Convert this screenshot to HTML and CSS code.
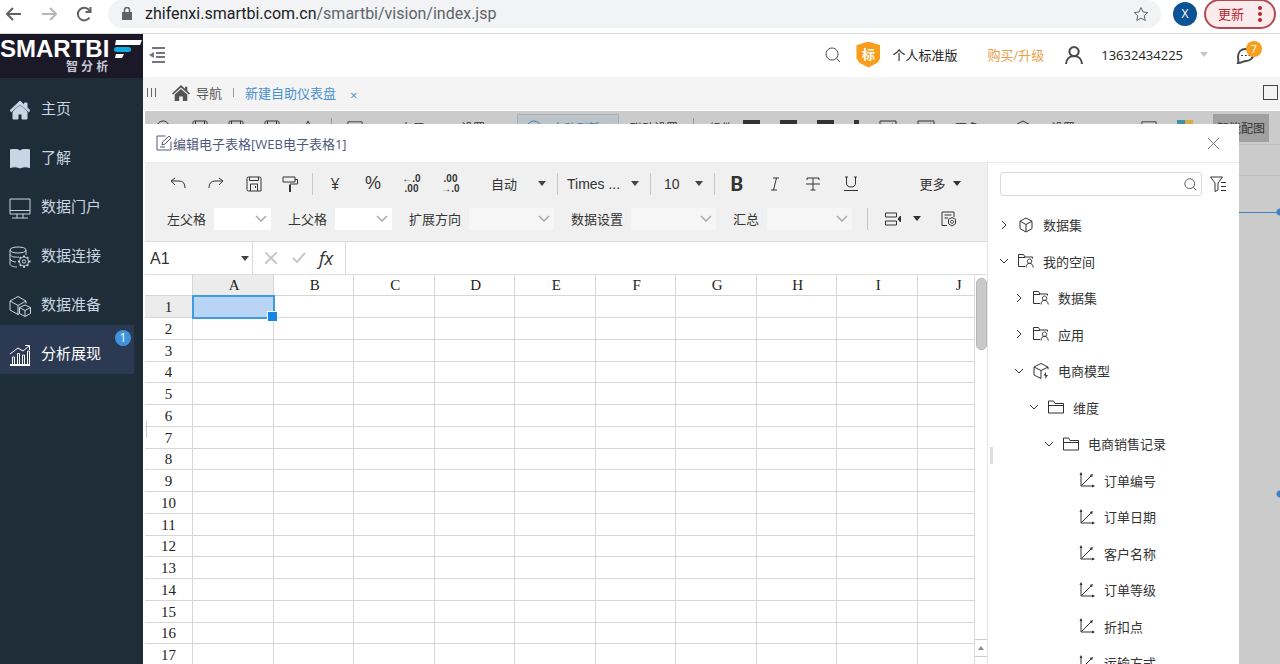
FILE: index.html
```
<!DOCTYPE html>
<html lang="zh-CN">
  <head>
    <meta charset="utf-8" />
    <title>Smartbi 智分析</title>
    <link rel="stylesheet" href="styles.css" />
  </head>

  <body>
    <!-- Shared icons -->
    <svg width="0" height="0" class="sprite">
      <symbol id="home" viewBox="0 0 20 20">
        <path fill="currentColor" d="M10 1 0 10.5l1.3 1.3L10 4l8.700 7.800L20 10.500l-3-2.900V3h-2.500v2.300zM10 5.500 3 11.800V19h5v-5h4v5h5v-7.200z" />
      </symbol>
      <symbol id="folder" viewBox="1 1 16 14">
        <path d="M1.500 14V2h5l1.500 2.500h8.500V14zM1.500 6.500h15" />
      </symbol>
      <symbol id="folder-user" viewBox="1 1 16 15">
        <path d="M8 14H1.500V2h5L8 4.500h7.500V6M1.500 5H8M12.500 6.500a2.200 2.200 0 1 0 .1 0M9 15c.2-3 1.500-4.200 3.500-4.200S15.800 12 16.300 15" />
      </symbol>
      <symbol id="cube" viewBox="0 0 16 16">
        <path d="M8 1l6 3.200v7.400L8 15l-6-3.400V4.200zM2 4.200 8 7.500l6-3.300M8 7.500V15" />
      </symbol>
      <symbol id="axis" viewBox="0 0 16 16">
        <path d="M2 1.500V14h13M2.500 13.500 13 3" />
        <path fill="currentColor" stroke="none" d="M2 0 .5 3h3zM16 14l-3-1.500v3zM14 2l-3.300 1 2.300 2.300z" />
      </symbol>
      <symbol id="search" viewBox="0 0 16 16">
        <path d="M7 1a6 6 0 1 0 .1 0M11.500 11.500 15 15" />
      </symbol>
      <symbol id="save" viewBox="0 0 16 16">
        <path d="M1 2.500Q1 1 2.500 1h11Q15 1 15 2.500V15H2.500Q1 15 1 13.500zM3.500 1v3.500h9V1M4.500 15V8h7v7M9.500 10v2" />
      </symbol>
      <symbol id="caret" viewBox="0 0 8 5">
        <path fill="currentColor" stroke="none" d="M0 0h8L4 5z" />
      </symbol>
      <symbol id="image" viewBox="0 0 18 16">
        <path d="M1 1h16v14H1zM2 12l5-5 4 4 3-2 3 3M13 4h1" />
      </symbol>
    </svg>

    <div class="browser-bar">
      <button class="plain" aria-label="后退">
        <svg class="icon" width="16" height="14" viewBox="0 0 16 14"><path d="M15 7H1M7 1 1 7l6 6" /></svg>
      </button>
      <button class="plain faded" aria-label="前进">
        <svg class="icon" width="16" height="14" viewBox="0 0 16 14"><path d="M1 7h14M9 1l6 6-6 6" /></svg>
      </button>
      <button class="plain" aria-label="刷新">
        <svg class="icon bold" width="16" height="16" viewBox="0 0 16 16"><path d="M13.500 11.500A6.300 6.300 0 1 1 13 4l1.500 2" /><path d="M14.500 1v5h-5" /></svg>
      </button>
      <div class="omnibox">
        <svg width="10" height="13" viewBox="0 0 10 13"><path fill="#5f6368" d="M0 5h10v8H0z" /><path fill="none" stroke="#5f6368" stroke-width="1.500" d="M2.500 5V3a2.500 2.500 0 0 1 5 0v2" /></svg>
        <span class="url">zhifenxi.smartbi.com.cn<span>/smartbi/vision/index.jsp</span></span>
        <svg class="icon star" width="16" height="16" viewBox="0 0 16 16"><path d="M8 1.500l2 4.500 4.800.5-3.600 3.200 1 4.800L8 12l-4.200 2.500 1-4.800L1.200 6.500 6 6z" /></svg>
      </div>
      <span class="avatar">X</span>
      <button class="update">更新
        <svg width="4" height="16" viewBox="0 0 4 16"><circle cx="2" cy="2" r="2" fill="#b3262d" /><circle cx="2" cy="8" r="2" fill="#b3262d" /><circle cx="2" cy="14" r="2" fill="#b3262d" /></svg>
      </button>
    </div>

    <div class="app">
      <aside class="sidebar">
        <div class="logo">
          <div class="logo-name">
            <span>SMARTBI</span>
            <svg width="28" height="20" viewBox="0 0 28 20"><path fill="#fff" d="M2 1h26l-2 5H1zM2 15h8l-2 4H1z" /><rect x="0" y="8" width="17" height="5" rx="2.500" fill="#10a9e0" /></svg>
          </div>
          <span class="logo-sub">智 分 析</span>
        </div>
        <nav>
          <a href="#"><svg class="icon solid"><use href="#home" /></svg>主页</a>
          <a href="#"><svg class="icon solid" viewBox="0 0 20 20"><path fill="currentColor" d="M0 1c4-1 7-1 9.500.500V19C7 17.500 4 17.500 0 18.500zM20 1c-4-1-7-1-9.500.500V19c2.500-1.500 5.500-1.500 9.500-.500z" /></svg>了解</a>
          <a href="#"><svg class="icon" viewBox="0 0 22 22"><path d="M1 2h20v15H1zM1 13.500h20M8 17v4M14 17v4M3 21h16" /></svg>数据门户</a>
          <a href="#"><svg class="icon" viewBox="0 0 22 22"><path d="M1 4c0-4 16-4 16 0s-16 4-16 0v14c0 2 4 3 7 3M1 8.500c1 2.500 6 3 9 2.500M1 13c1 2 4 3 6 3M17 4v5" /><circle cx="15" cy="15.500" r="4.500" /><circle cx="15" cy="15.500" r="1.700" /><path stroke-width="2" d="M15 9.500v1.500M15 20v1.700M9 15.500h1.500M19.500 15.500h2M10.800 11.300l1 1M19.200 19.700l-1-1M19.200 11.300l-1 1M10.800 19.700l1-1" /></svg>数据连接</a>
          <a href="#"><svg class="icon" viewBox="0 0 22 22"><path d="M10 19l-1 .5L1 15V6l8-4.500L17 6v2.500M1 6l8 4.500L17 6M9 10.500v9M16 10l5.500 2.500v6L16 21.500l-5.500-3v-6zM10.500 12.500 16 15.500l5.500-3M16 15.500v6" /></svg>数据准备</a>
          <a href="#" class="active"><svg class="icon" viewBox="0 0 22 22"><path stroke-width="2" d="M1 21h20" /><path d="M3.500 20v-7h2v7M8.500 20V9.500h2V20M13.500 20v-9h2v9M18.500 20V7h2v13" /><path d="M1 10l8-6 5 3 6-5M16 1.500h4.500V6" /></svg>分析展现<span class="badge">1</span></a>
        </nav>
      </aside>

      <main>
        <header class="header">
          <button class="plain fold" aria-label="收起菜单">
            <svg width="16" height="16" viewBox="0 0 16 16"><path fill="none" stroke="#74777c" stroke-width="2" d="M3 1h13M7 6h9M7 10h9M3 15h13" /><path fill="#74777c" d="M0 8l5-3v6z" /></svg>
          </button>
          <button class="plain" aria-label="搜索"><svg class="icon" width="16" height="16"><use href="#search" /></svg></button>
          <span class="shield">标</span>
          <span class="edition">个人标准版</span>
          <a href="#" class="buy">购买/升级</a>
          <svg class="icon bold" width="18" height="18" viewBox="0 0 18 18"><path d="M9 1a4.600 4.600 0 1 0 .1 0M1 18c.3-5 3.500-8 8-8s7.700 3 8 8" /></svg>
          <span class="phone">13632434225</span>
          <svg class="user-caret" width="10" height="5"><use href="#caret" /></svg>
          <button class="plain chat" aria-label="消息">
            <svg class="icon bold" width="18" height="18" viewBox="0 0 18 18"><path d="M2 17c1-2 0-4 0-6 0-5 3-8 7.500-8S17 6 17 9s-3 6-7 6c-3 0-4 2-8 2z" /><path d="M6 9v1M10 9v1M13.500 9v1" /></svg>
            <span class="count">7</span>
          </button>
        </header>

        <div class="tabs">
          <svg width="9" height="9" viewBox="0 0 9 9"><path stroke="#666" d="M.5 0v9M4.500 0v9M8.500 0v9" /></svg>
          <a href="#" class="nav-tab"><svg width="18" height="18"><use href="#home" /></svg>导航</a>
          <span class="tab-line"></span>
          <a href="#" class="current">新建自助仪表盘</a>
          <button class="plain tab-close" aria-label="关闭标签">×</button>
          <span class="window-box"></span>
        </div>

        <div class="workspace">
          <!-- Dashboard toolbar, mostly hidden behind the dialog -->
          <div class="dash-bar">
            <svg class="icon" width="16" height="16"><use href="#search" /></svg>
            <svg class="icon" width="16" height="16"><use href="#save" /></svg>
            <svg class="icon" width="16" height="16"><use href="#save" /></svg>
            <svg class="icon" width="16" height="16"><use href="#save" /></svg>
            <svg class="icon" width="16" height="16" viewBox="0 0 16 16"><path d="M1 15 8 1l7 14" /></svg>
            <i></i>
            <svg class="icon dash-chart" width="16" height="16"><use href="#image" /></svg>
            <span class="dash-text">布局</span>
            <span class="dash-text">设置</span>
            <button class="dash-on"><svg class="icon" width="16" height="16" viewBox="0 0 16 16"><circle cx="8" cy="8" r="7" /></svg>自动刷新</button>
            <span>联动设置</span>
            <i></i>
            <span class="dash-part">组件</span>
            <b></b><b></b><b></b><b class="dot"></b>
            <svg class="icon" width="18" height="16"><use href="#image" /></svg>
            <svg class="icon" width="18" height="16"><use href="#image" /></svg>
            <span class="dash-text">更多</span>
            <svg class="icon" width="16" height="16"><use href="#cube" /></svg>
            <span>设置</span>
            <svg class="icon dash-end" width="16" height="16"><use href="#image" /></svg>
            <em></em>
            <button class="match">智能配图</button>
          </div>
          <div class="dash-row"></div>
          <div class="dash-canvas"></div>

          <section class="dialog" role="dialog" aria-label="编辑电子表格">
            <div class="dialog-title">
              <svg class="icon" width="16" height="16" viewBox="0 0 16 16"><path d="M9.500 1H1v14h14V6.500M6 10l.7-3L13 1l2 2-6.200 6.200zM4 12h5" /></svg>
              <span>编辑电子表格[WEB电子表格1]</span>
              <button class="plain" aria-label="关闭"><svg class="icon" width="11" height="11" viewBox="0 0 11 11"><path d="M0 0l11 11M11 0 0 11" /></svg></button>
            </div>

            <div class="dialog-body">
              <div class="editor">
                <div class="toolbar">
                  <div class="tool-row">
                    <button aria-label="撤销"><svg class="icon" width="16" height="14" viewBox="0 0 16 14"><path d="M5 1 1 4l4 4M1 4h8q6 0 6 7" /></svg></button>
                    <button aria-label="重做"><svg class="icon" width="16" height="14" viewBox="0 0 16 14"><path d="M11 1l4 3-4 4M15 4H7q-6 0-6 7" /></svg></button>
                    <button aria-label="保存"><svg class="icon" width="16" height="16"><use href="#save" /></svg></button>
                    <button class="brush" aria-label="格式刷"><svg class="icon" width="16" height="16" viewBox="0 0 16 16"><path d="M1 1h12v5H1zM13 3.500h2.500V8H8v2" /><path stroke-width="2" d="M8 9v7" /></svg></button>
                    <i></i>
                    <button>¥</button>
                    <button class="percent">%</button>
                    <button class="decimal" aria-label="减少小数">←.0<br />.00</button>
                    <button class="decimal" aria-label="增加小数">.00<br />→.0</button>
                    <select class="fmt" aria-label="格式"><option>自动</option></select>
                    <i></i>
                    <select class="font" aria-label="字体"><option>Times ...</option></select>
                    <i></i>
                    <select class="size" aria-label="字号"><option>10</option></select>
                    <i></i>
                    <button class="b">B</button>
                    <button aria-label="斜体"><svg class="icon" width="10" height="14" viewBox="0 0 10 14"><path d="M3 1h6M1 13h6M6.500 1l-3 12" /></svg></button>
                    <button aria-label="删除线"><svg class="icon" width="14" height="14" viewBox="0 0 14 14"><path d="M1 3V1h12v2M7 1v12M4.500 13h5M0 7h14" /></svg></button>
                    <button aria-label="下划线"><svg class="icon" width="14" height="15" viewBox="0 0 14 15"><path d="M1 1h3M10 1h3M2.500 1v6q0 4 4.500 4t4.500-4V1M0 14.500h14" /></svg></button>
                    <button class="more">更多<svg class="icon" width="8" height="5"><use href="#caret" /></svg></button>
                  </div>
                  <div class="tool-row fields">
                    <label for="left">左父格</label>
                    <select id="left"></select>
                    <label for="top">上父格</label>
                    <select id="top"></select>
                    <label for="expand">扩展方向</label>
                    <select id="expand" class="wide" disabled></select>
                    <label for="data">数据设置</label>
                    <select id="data" class="wide" disabled></select>
                    <label for="total">汇总</label>
                    <select id="total" class="wide" disabled></select>
                    <i></i>
                    <button class="insert" aria-label="插入"><svg class="icon" width="16" height="14" viewBox="0 0 16 14"><path d="M.5 1h11v4H.500zM.5 9h11v4H.500z" /><path fill="currentColor" d="M13 7l2.500-3v6z" /></svg><svg class="icon" width="8" height="5"><use href="#caret" /></svg></button>
                    <button aria-label="设置"><svg class="icon" width="16" height="16" viewBox="0 0 16 16"><path d="M6 14.500H1V1h12v5M3.500 4h7M3.500 7H7" /><path d="M11 6.500l3.500 1.800v4.400L11 15l-3.500-2.300V8.300zM11 9.300a1.500 1.500 0 1 0 .1 0" /></svg></button>
                  </div>
                </div>

                <div class="formula">
                  <select class="cell-name" aria-label="单元格"><option>A1</option></select>
                  <div class="formula-tools">
                    <svg class="icon bold" width="12" height="12" viewBox="0 0 12 12"><path d="M0 0l12 12M12 0 0 12" /></svg>
                    <svg class="icon bold" width="14" height="12" viewBox="0 0 14 12"><path d="M1 6l4 4 8-9" /></svg>
                    <span>fx</span>
                  </div>
                  <input type="text" aria-label="公式" />
                </div>

                <div class="sheet">
                  <div class="cells">
                    <table>
                      <thead>
                        <tr id="letters"><th class="corner"></th></tr>
                      </thead>
                      <tbody id="rows"></tbody>
                    </table>
                  </div>
                  <div class="scroll">
                    <div class="thumb"></div>
                    <div class="scroll-btn"><svg width="6" height="4" viewBox="0 0 6 4"><path fill="#888" d="M0 4h6L3 0z" /></svg></div>
                    <div class="scroll-btn"></div>
                  </div>
                </div>
                <span class="grip"></span>
              </div>

              <div class="panel">
                <span class="splitter"></span>
                <div class="find">
                  <div class="find-box">
                    <input type="text" aria-label="搜索字段" />
                    <svg class="icon" width="13" height="13"><use href="#search" /></svg>
                  </div>
                  <button class="plain" aria-label="筛选"><svg class="icon" width="16" height="16" viewBox="0 0 16 16"><path d="M.5 1h12L8 7v7l-3 1.500V7zM11 6.500h5M11 10.500h5M11 14.500h5" /></svg></button>
                </div>
                <ul class="tree">
                  <li><svg class="icon arrow" viewBox="0 0 8 8"><path d="M2 0l4 4-4 4" /></svg><svg class="icon"><use href="#cube" /></svg>数据集</li>
                  <li><svg class="icon arrow" viewBox="0 0 8 8"><path d="M0 2l4 4 4-4" /></svg><svg class="icon"><use href="#folder-user" /></svg>我的空间</li>
                  <li class="l1"><svg class="icon arrow" viewBox="0 0 8 8"><path d="M2 0l4 4-4 4" /></svg><svg class="icon"><use href="#folder-user" /></svg>数据集</li>
                  <li class="l1"><svg class="icon arrow" viewBox="0 0 8 8"><path d="M2 0l4 4-4 4" /></svg><svg class="icon"><use href="#folder-user" /></svg>应用</li>
                  <li class="l1"><svg class="icon arrow" viewBox="0 0 8 8"><path d="M0 2l4 4 4-4" /></svg><svg class="icon" viewBox="0 0 16 16"><path d="M8 15.500 1 12V4l7-3.500L15 4v2.500M1 4l7 3.500L15 4M8 7.500v8" /><path fill="currentColor" d="M13 9l-2.500 3.500h2L12 16l3-4h-2z" stroke="none" /></svg>电商模型</li>
                  <li class="l2"><svg class="icon arrow" viewBox="0 0 8 8"><path d="M0 2l4 4 4-4" /></svg><svg class="icon"><use href="#folder" /></svg>维度</li>
                  <li class="l3"><svg class="icon arrow" viewBox="0 0 8 8"><path d="M0 2l4 4 4-4" /></svg><svg class="icon"><use href="#folder" /></svg>电商销售记录</li>
                  <li class="l4"><svg class="icon"><use href="#axis" /></svg>订单编号</li>
                  <li class="l4"><svg class="icon"><use href="#axis" /></svg>订单日期</li>
                  <li class="l4"><svg class="icon"><use href="#axis" /></svg>客户名称</li>
                  <li class="l4"><svg class="icon"><use href="#axis" /></svg>订单等级</li>
                  <li class="l4"><svg class="icon"><use href="#axis" /></svg>折扣点</li>
                  <li class="l4"><svg class="icon"><use href="#axis" /></svg>运输方式</li>
                </ul>
              </div>
            </div>
          </section>
        </div>
      </main>
    </div>

    <script>
      const letters = document.getElementById("letters");
      const rows = document.getElementById("rows");

      for (const name of "ABCDEFGHIJ") {
        const th = document.createElement("th");
        th.textContent = name;
        letters.appendChild(th);
      }

      for (let i = 1; i <= 17; i++) {
        const tr = document.createElement("tr");
        tr.innerHTML = "<th>" + i + "</th>" + "<td></td>".repeat(10);
        rows.appendChild(tr);
      }

      // Select cell A1
      letters.children[1].className = "picked";
      rows.rows[0].cells[0].className = "picked";
      rows.rows[0].cells[1].className = "selected";
    </script>
  </body>
</html>
```
FILE: styles.css
```
* {
  box-sizing: border-box;
}

body {
  margin: 0;
  height: 100vh;
  overflow: hidden;
  display: flex;
  flex-direction: column;
  font-family: "Open Sans", "Noto Sans CJK SC", sans-serif;
  font-size: 13px;
  color: #333;
  background: #fff;
}

button,
input,
select {
  font: inherit;
  color: inherit;
}

button {
  padding: 0;
  border: none;
  background: none;
  cursor: pointer;
}

a {
  color: inherit;
  text-decoration: none;
}

.sprite {
  position: absolute;
}

.icon {
  fill: none;
  stroke: currentColor;
  flex: none;
}

.icon.bold {
  stroke-width: 2;
}

.plain {
  display: flex;
  align-items: center;
}

/* Browser bar */
.browser-bar {
  flex: none;
  display: flex;
  align-items: center;
  height: 34px;
  padding: 0 4px 6px 6px;
  border-bottom: 1px solid #d8d8da;
  color: #5f6368;
}

.browser-bar > .plain {
  width: 35px;
}

.browser-bar .icon {
  stroke-width: 2;
}

.browser-bar .star {
  stroke-width: 1;
}

.browser-bar .faded {
  color: #b4b6b9;
}

.omnibox {
  flex: 1;
  display: flex;
  align-items: center;
  gap: 13px;
  height: 28px;
  margin-left: -3px;
  padding: 0 12px 0 14px;
  border-radius: 14px;
  background: #f1f3f4;
}

.url {
  flex: 1;
  font-family: Roboto, sans-serif;
  font-size: 16px;
  color: #202124;
}

.url span {
  color: #5f6368;
}

.avatar {
  width: 24px;
  height: 24px;
  margin-left: 12px;
  border-radius: 50%;
  background: #0b5394;
  color: #fff;
  font-size: 12px;
  line-height: 24px;
  text-align: center;
}

.update {
  display: flex;
  align-items: center;
  gap: 14px;
  height: 30px;
  margin-left: 7px;
  padding: 0 12px;
  border: 2px solid #b3494e;
  border-radius: 15px;
  background: #fcebec;
  color: #b3262d;
}

.app {
  flex: 1;
  display: flex;
  min-height: 0;
}

/* Sidebar */
.sidebar {
  width: 143px;
  flex: none;
  background: #1e2d37;
  color: #c9d5e2;
}

.logo {
  height: 44px;
  padding-top: 4px;
  background: #1b1928;
  color: #fff;
}

.logo-name {
  display: flex;
  align-items: center;
  gap: 5px;
  height: 21px;
  font: bold 24px/20px "Liberation Sans", sans-serif;
}

.logo-name span {
  width: 109px;
}

.logo-sub {
  display: block;
  padding-left: 66px;
  font-size: 12px;
  font-weight: bold;
  line-height: 16px;
  color: #c5c8d4;
}

.sidebar nav {
  padding-top: 2px;
}

.sidebar nav a {
  position: relative;
  display: flex;
  align-items: center;
  gap: 10px;
  height: 49px;
  margin-right: 9px;
  padding: 6px 0 0 9px;
  font-size: 15px;
}

.sidebar nav .icon {
  width: 22px;
  height: 22px;
  margin-top: 4px;
}

.sidebar nav .solid {
  padding: 1px;
}

.sidebar nav .active {
  background: #2b3953;
  color: #fff;
}

.badge {
  position: absolute;
  right: 3px;
  top: 5px;
  width: 16px;
  height: 16px;
  border-radius: 50%;
  background: #3d94dc;
  font-size: 12px;
  line-height: 16px;
  text-align: center;
}

main {
  flex: 1;
  display: flex;
  flex-direction: column;
  min-width: 0;
}

.header {
  flex: none;
  display: flex;
  align-items: center;
  height: 43px;
  padding: 0 18px 2px 6px;
  color: #4a4a4a;
}

.fold {
  margin-right: auto;
}

.shield {
  width: 24px;
  height: 26px;
  margin: 0 12px 0 15px;
  background: #f99d1c;
  clip-path: polygon(50% 0, 100% 14%, 100% 64%, 88% 82%, 50% 100%, 12% 82%, 0 64%, 0 14%);
  color: #fff;
  font-weight: bold;
  line-height: 25px;
  text-align: center;
}

.edition {
  color: #222;
}

.buy {
  margin: 0 21px 0 30px;
  color: #e9a04c;
}

.phone {
  margin: 0 16px 0 18px;
  color: #222;
}

.user-caret {
  color: #c4c4c4;
}

.chat {
  position: relative;
  width: 26px;
  margin-left: 27px;
}

.count {
  position: absolute;
  right: 0;
  top: -5px;
  width: 16px;
  height: 16px;
  border-radius: 50%;
  background: #f99d1c;
  color: #fff;
  font-size: 11px;
  line-height: 16px;
  text-align: center;
}

.tabs {
  flex: none;
  display: flex;
  align-items: center;
  height: 34px;
  padding: 0 0 2px 4px;
  border-bottom: 1px solid #fff;
  background: #f4f4f4;
  color: #555;
}

.nav-tab {
  display: flex;
  align-items: center;
  gap: 6px;
  margin-left: 16px;
}

.tab-line {
  width: 1px;
  height: 9px;
  margin: 0 11px;
  background: #999;
}

.current {
  color: #4a90d0;
}

.tab-close {
  margin: 4px 0 0 14px;
  color: #4a90d0;
}

.window-box {
  width: 15px;
  height: 15px;
  margin-left: auto;
  margin-right: 2px;
  border: 1px solid #444;
}

/* Dimmed dashboard */
.workspace {
  position: relative;
  flex: 1;
  display: flex;
  flex-direction: column;
  min-height: 0;
  margin-left: 2px;
  background: #cbcbcb;
}

.dash-bar {
  flex: none;
  display: flex;
  align-items: center;
  gap: 20px;
  height: 34px;
  padding: 0 11px;
  border-bottom: 1px solid #bdbdbd;
  font-size: 12px;
  white-space: nowrap;
  overflow: hidden;
}

.dash-bar i {
  width: 1px;
  height: 20px;
  margin: 0 -5px;
  background: #999;
}

.dash-bar b {
  width: 17px;
  height: 16px;
  background: #333;
}

.dash-bar b.dot {
  width: 5px;
}

.dash-bar em {
  width: 16px;
  height: 16px;
  background: linear-gradient(to right, #3b93a3 50%, #dcaa45 50%);
}

.dash-chart {
  margin-right: 18px;
}

.dash-text {
  margin-right: 16px;
}

.dash-part {
  margin-right: -10px;
}

.dash-end {
  margin-left: auto;
}

.dash-on {
  display: flex;
  align-items: center;
  gap: 10px;
  width: 102px;
  height: 28px;
  margin: 0 -9px 0 -4px;
  padding: 0 8px;
  border: 1px solid #a9b1b8;
  background: #bfc4c8;
  color: #3a7fbd;
}

.match {
  height: 28px;
  padding: 0 4px;
  background: #a0a0a0;
}

.dash-row {
  flex: none;
  height: 31px;
  border-bottom: 1px solid #bdbdbd;
}

/* Edge of the selected component */
.dash-canvas {
  height: 292px;
  margin-top: 31px;
  background:
    radial-gradient(circle at 100% 5px, #3d80c4 3px, transparent 4px),
    radial-gradient(circle at 100% calc(100% - 5px), #3d80c4 3px, transparent 4px),
    linear-gradient(#3d80c4, #3d80c4) 0 5px / 100% 1px no-repeat;
}

/* Dialog */
.dialog {
  position: absolute;
  left: 0;
  right: 41px;
  top: 13px;
  bottom: 0;
  display: flex;
  flex-direction: column;
  background: #fff;
}

.dialog-title {
  flex: none;
  display: flex;
  align-items: center;
  gap: 1px;
  height: 39px;
  padding: 0 20px 0 11px;
  border-bottom: 1px solid #ececec;
  color: #50597b;
}

.dialog-title button {
  margin-left: auto;
  color: #777;
}

.dialog-body {
  flex: 1;
  display: flex;
  min-height: 0;
}

.editor {
  position: relative;
  flex: 1;
  display: flex;
  flex-direction: column;
  min-width: 0;
  border-right: 1px solid #e4e4e4;
}

.toolbar {
  flex: none;
  padding: 3px 0 5px;
  border-bottom: 1px solid #dcdcdc;
  background: #f0f0f0;
}

.tool-row {
  display: flex;
  align-items: center;
  height: 35px;
  padding-left: 14px;
}

.tool-row button {
  display: flex;
  align-items: center;
  justify-content: center;
  width: 38px;
  height: 28px;
  font-size: 16px;
}

.tool-row i {
  width: 1px;
  height: 22px;
  margin: 0 3px;
  background: #c8c8c8;
}

.tool-row .brush {
  width: 34px;
  margin-right: 2px;
}

.tool-row .percent {
  font: 18px "Liberation Sans", sans-serif;
}

.tool-row .decimal {
  width: 39px;
  font: bold 10px/10px "Liberation Sans", sans-serif;
}

.tool-row .b {
  font: bold 20px Roboto, sans-serif;
}

.tool-row .more {
  gap: 7px;
  width: 42px;
  margin-left: auto;
  margin-right: 26px;
  font-size: 13px;
  white-space: nowrap;
}

select {
  appearance: none;
  border: none;
  border-radius: 0;
  background: url("data:image/svg+xml,%3Csvg xmlns='http://www.w3.org/2000/svg' width='8' height='5'%3E%3Cpath fill='%23444' d='M0 0h8L4 5z'/%3E%3C/svg%3E") no-repeat right 8px center;
}

.fmt {
  width: 69px;
  margin-left: 15px;
  padding-left: 6px;
}

.tool-row .font {
  width: 86px;
  padding-left: 6px;
  font: 14px "Liberation Sans", sans-serif;
}

.tool-row .size {
  width: 57px;
  padding-left: 10px;
  font: 14px "Liberation Sans", sans-serif;
}

.fields {
  padding-left: 22px;
}

.fields select {
  width: 57px;
  height: 22px;
  margin: 0 17px 0 8px;
  background: #fff url("data:image/svg+xml,%3Csvg xmlns='http://www.w3.org/2000/svg' width='12' height='7'%3E%3Cpath fill='none' stroke='%23aaa' stroke-width='1.500' d='M1 1l5 5 5-5'/%3E%3C/svg%3E") no-repeat right 4px center;
}

.fields .wide {
  width: 85px;
  background-color: #f6f6f6;
  opacity: 1;
}

.fields i {
  margin: 0 8px 0 -2px;
}

.fields .insert {
  gap: 12px;
  width: 54px;
}

/* Formula bar */
.formula {
  flex: none;
  display: flex;
  height: 33px;
  border-bottom: 1px solid #dcdcdc;
}

.cell-name {
  width: 108px;
  padding-left: 5px;
  border-right: 1px solid #dcdcdc;
  background-position: right 3px center;
  font: 16px "Liberation Sans", sans-serif;
}

.formula-tools {
  display: flex;
  align-items: center;
  gap: 15px;
  width: 93px;
  padding-left: 12px;
  border-right: 1px solid #dcdcdc;
  color: #c8c8c8;
}

.formula-tools span {
  margin-left: -2px;
  color: #333;
  font: italic 18px "Open Sans", sans-serif;
}

.formula input {
  flex: 1;
  min-width: 0;
  border: none;
}

/* Sheet */
.sheet {
  flex: 1;
  display: flex;
  min-height: 0;
}

.cells {
  flex: 1;
  overflow: hidden;
  border-right: 1px solid #dcdcdc;
}

table {
  width: calc(100% + 24px);
  table-layout: fixed;
  border-collapse: separate;
  border-spacing: 0;
  font: 15px "Liberation Serif", serif;
  color: #222;
}

th,
td {
  height: 22px;
  padding: 0;
  border-right: 1px solid #d6d6d6;
  border-bottom: 1px solid #d6d6d6;
  font-weight: normal;
  line-height: 20px;
}

thead th,
tbody tr:nth-child(4n) th,
tbody tr:nth-child(4n) td {
  height: 21px;
}

th + th {
  padding-left: 3px;
}

.corner {
  width: 48px;
}

.picked {
  background: #ececec;
}

.selected {
  position: relative;
  background: #b9d4f5;
  outline: 2px solid #3d9be0;
  outline-offset: -1px;
}

/* Fill handle */
.selected::after {
  content: "";
  position: absolute;
  right: -5px;
  bottom: -5px;
  width: 9px;
  height: 9px;
  border: 1px solid #fff;
  background: #1585e8;
}

.scroll {
  display: flex;
  flex-direction: column;
  width: 12px;
  padding-top: 3px;
}

.thumb {
  height: 72px;
  margin: 0 0 auto 1px;
  border: 1px solid #b8b8b8;
  border-radius: 5px;
  background: #c9c9c9;
}

.scroll-btn {
  display: flex;
  align-items: center;
  justify-content: center;
  height: 17px;
  border-top: 1px solid #ccc;
}

.scroll-btn:last-child {
  height: 8px;
}

.grip {
  position: absolute;
  left: 1px;
  top: 258px;
  width: 1px;
  height: 17px;
  background: #ccc;
}

/* Field panel */
.panel {
  position: relative;
  width: 251px;
  flex: none;
  overflow: hidden;
}

.splitter {
  position: absolute;
  left: 2px;
  top: 284px;
  width: 3px;
  height: 17px;
  background: #ddd;
}

.find {
  display: flex;
  align-items: center;
  gap: 8px;
  padding: 9px 13px 0 12px;
}

.find-box {
  flex: 1;
  display: flex;
  align-items: center;
  height: 24px;
  padding-right: 4px;
  border: 1px solid #d9d9d9;
  border-radius: 3px;
}

.find-box input {
  flex: 1;
  min-width: 0;
  border: none;
  outline: none;
}

.tree {
  margin: 0;
  padding: 10px 0 0 12px;
  list-style: none;
}

.tree li {
  display: flex;
  align-items: center;
  height: 36px;
  white-space: nowrap;
}

.tree li:nth-child(odd) {
  height: 37px;
}

.tree .icon {
  width: 16px;
  height: 16px;
  margin-right: 9px;
}

.tree .arrow {
  width: 8px;
  height: 8px;
  margin-right: 10px;
}

.tree .l1 {
  padding-left: 15px;
}

.tree .l2 {
  padding-left: 30px;
}

.tree .l3 {
  padding-left: 45px;
}

.tree .l4 {
  padding-left: 79px;
}
```
